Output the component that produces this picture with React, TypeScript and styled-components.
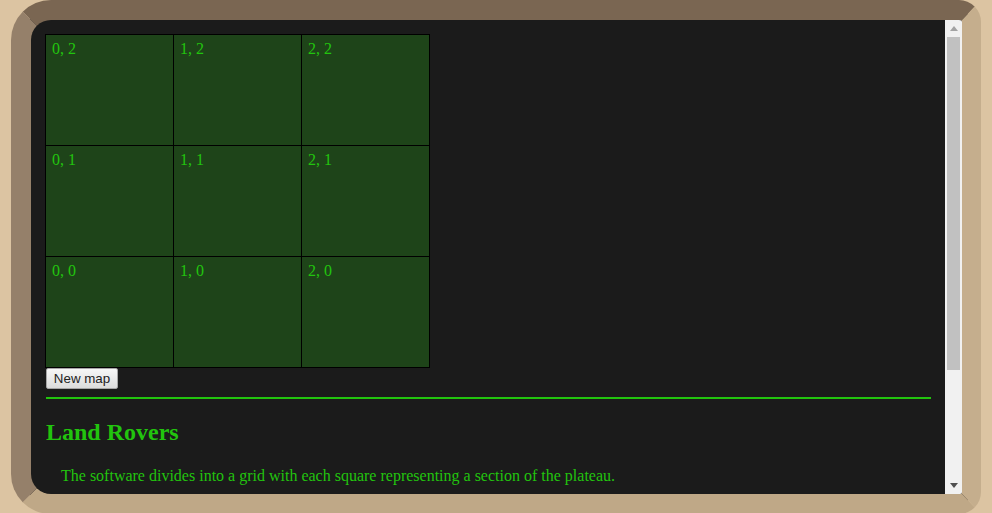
import React from "react";
import styled, { createGlobalStyle } from "styled-components";

const Global = createGlobalStyle`
  html, body { margin: 0; padding: 0; }
  body {
    background: #dcc4a2;
    font-family: "Liberation Serif", "Times New Roman", serif;
    height: 513px;
    overflow: hidden;
  }
`;

const Frame = styled.div`
  box-sizing: border-box;
  margin: 0 11px;
  height: 514px;
  border: 20px solid;
  border-right-width: 19px;
  border-color: #7a6652 #c5ae8d #bfa887 #95806a;
  border-radius: 40px 22px 22px 40px;
  background: #1b1b1b;
  overflow: hidden;
  display: flex;
`;

const Content = styled.div`
  flex: 1;
  min-width: 0;
  overflow: hidden;
  padding: 14px;
  color: #22c40e;
`;

const ScrollBar = styled.div`
  flex: 0 0 17px;
  display: flex;
  flex-direction: column;
  background: #f1f1f1;
`;

const ScrollButton = styled.div`
  height: 17px;
  display: flex;
  align-items: center;
  justify-content: center;
`;

const Track = styled.div`
  flex: 1;
  padding: 0 2px;
`;

const Thumb = styled.div`
  height: 333px;
  background: #c1c1c1;
`;

const Map = styled.div`
  display: grid;
  grid-template-columns: repeat(3, 127px);
  grid-template-rows: repeat(3, 110px);
  gap: 1px;
  padding: 1px;
  background: #000;
  width: max-content;
`;

const Cell = styled.div`
  background: #1e4419;
  color: #22c40e;
  font-size: 16px;
  padding: 5px 6px;
`;

const Button = styled.button`
  display: block;
  box-sizing: border-box;
  margin: 0 0 0 1px;
  width: 72px;
  height: 21px;
  padding: 0 6px;
  font-family: "Liberation Sans", Arial, sans-serif;
  font-size: 13.33px;
  color: #222;
  background: linear-gradient(#f7f7f7, #dcdcdc);
  border: 1px solid #a6a6a6;
  border-radius: 2px;
`;

const Rule = styled.hr`
  margin: 8px 0 0 1px;
  border: 0;
  height: 2px;
  background: #22c40e;
`;

const Title = styled.h2`
  margin: 20px 0 0 1px;
  font-size: 24px;
  font-weight: bold;
  color: #22c40e;
`;

const Para = styled.p`
  margin: 21px 0 16px 16px;
  font-size: 16px;
  color: #22c40e;
`;

const cells = [2, 1, 0].flatMap((y) => [0, 1, 2].map((x) => `${x}, ${y}`));

export default function App() {
  return (
    <>
      <Global />
      <Frame>
        <Content>
          <Map>
            {cells.map((c) => (
              <Cell key={c}>{c}</Cell>
            ))}
          </Map>
          <Button>New map</Button>
          <Rule />
          <Title>Land Rovers</Title>
          <Para>The software divides into a grid with each square representing a section of the plateau.</Para>
        </Content>
        <ScrollBar>
          <ScrollButton>
            <svg width="8" height="5" viewBox="0 0 8 5">
              <path d="M0 5 L4 0 L8 5 Z" fill="#a3a3a3" />
            </svg>
          </ScrollButton>
          <Track>
            <Thumb />
          </Track>
          <ScrollButton>
            <svg width="8" height="5" viewBox="0 0 8 5">
              <path d="M0 0 L8 0 L4 5 Z" fill="#505050" />
            </svg>
          </ScrollButton>
        </ScrollBar>
      </Frame>
    </>
  );
}
